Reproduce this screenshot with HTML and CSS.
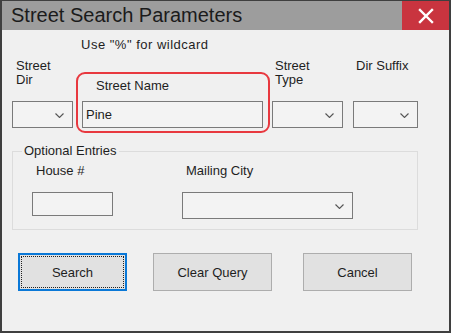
FILE: index.html
```html
<!DOCTYPE html>
<html lang="en">
<head>
  <meta charset="UTF-8" />
  <title>Street Search Parameters</title>
  <link rel="stylesheet" href="styles.css">
</head>
<body>

<div class="window">
  <div class="titlebar">
    <div class="title">Street Search Parameters</div>
    <div class="close">
      <svg width="16" height="16" viewBox="0 0 16 16"><path d="M2 2 L14 14 M14 2 L2 14" stroke="#fff" stroke-width="2.4" stroke-linecap="square"/></svg>
    </div>
  </div>

  <div class="content">
    <div class="hint">Use "%" for wildcard</div>

    <div class="fields">
      <div class="col col-dir">
        <div class="label tall">Street<br>Dir</div>
        <div class="combo w-dir"><svg class="chev" width="9" height="5" viewBox="0 0 9 5"><polyline points="0.5,0.5 4.5,4.5 8.5,0.5" fill="none" stroke="#555" stroke-width="1.1"/></svg></div>
      </div>

      <div class="name-box">
        <div class="label name-label">Street Name</div>
        <div class="textbox w-name">Pine</div>
      </div>

      <div class="col col-type">
        <div class="label tall">Street<br>Type</div>
        <div class="combo w-type"><svg class="chev" width="9" height="5" viewBox="0 0 9 5"><polyline points="0.5,0.5 4.5,4.5 8.5,0.5" fill="none" stroke="#555" stroke-width="1.1"/></svg></div>
      </div>

      <div class="col col-suffix">
        <div class="label tall">Dir Suffix</div>
        <div class="combo w-suffix"><svg class="chev" width="9" height="5" viewBox="0 0 9 5"><polyline points="0.5,0.5 4.5,4.5 8.5,0.5" fill="none" stroke="#555" stroke-width="1.1"/></svg></div>
      </div>
    </div>

    <fieldset class="group">
      <legend>Optional Entries</legend>
      <div class="col col-house">
        <div class="label">House #</div>
        <div class="textbox w-house"></div>
      </div>
      <div class="col col-city">
        <div class="label">Mailing City</div>
        <div class="combo w-city"><svg class="chev" width="9" height="5" viewBox="0 0 9 5"><polyline points="0.5,0.5 4.5,4.5 8.5,0.5" fill="none" stroke="#555" stroke-width="1.1"/></svg></div>
      </div>
    </fieldset>

    <div class="buttons">
      <button class="btn btn-search"><span>Search</span></button>
      <button class="btn btn-clear">Clear Query</button>
      <button class="btn btn-cancel">Cancel</button>
    </div>
  </div>
</div>

</body>
</html>
```

FILE: styles.css
```css
body { margin: 0; font-family: "Liberation Sans", Arial, sans-serif; font-size: 13px; color: #1e1e1e; }
.window {
  width: 451px;
  height: 333px;
  box-sizing: border-box;
  border: 2px solid #3f3f3f;
  border-top-width: 1px;
  background: #f0f0f0;
  overflow: hidden;
}
.titlebar { display: flex; height: 29px; background: #9d9d9d; }
.title { flex: 1; padding-left: 9px; font-size: 20px; line-height: 29px; color: #1b1b1b; }
.close {
  width: 47px;
  background: #c9343f;
  display: flex;
  align-items: center;
  justify-content: center;
}
.hint { margin: 8px 0 0 79px; line-height: 14px; letter-spacing: 0.5px; }
.fields { display: flex; align-items: flex-start; margin-top: 7px; padding-left: 10px; }
.label { line-height: 14px; padding-left: 4px; white-space: nowrap; }
.label.tall { height: 28px; }
.col { display: flex; flex-direction: column; }
.col-dir { width: 61px; }
.col-type { width: 71px; margin-left: 2px; }
.col-type .label, .col-suffix .label { padding-left: 3px; }
.col-suffix { width: 65px; margin-left: 10px; }
.combo, .textbox {
  box-sizing: border-box;
  border: 1px solid #7a7a7a;
  background: #f3f3f3;
}
.combo {
  height: 27px;
  margin-top: 14px;
  display: flex;
  align-items: center;
  justify-content: flex-end;
  padding: 2px 8px 0 0;
}
.w-dir { width: 61px; }
.w-type { width: 71px; }
.w-suffix { width: 65px; }
.name-box {
  width: 194px;
  box-sizing: border-box;
  margin: 13px 0 0 3px;
  padding: 5px 0 3px 4px;
  border: 2px solid #e8383f;
  border-radius: 9px;
}
.name-label { padding-left: 14px; }
.textbox { padding-left: 3px; line-height: 25px; }
.w-name { width: 181px; height: 27px; margin-top: 8px; }
.group {
  display: flex;
  width: 406px;
  box-sizing: border-box;
  margin: 11px 0 0 10px;
  padding: 6px 0 10px 9px;
  border: 1px solid #dcdcdc;
}
.group legend { padding: 0 2px; line-height: 14px; }
.col-house { margin-left: 10px; }
.w-house { width: 81px; height: 24px; margin-top: 14px; }
.col-city { margin-left: 69px; }
.w-city { width: 171px; }
.buttons { display: flex; margin: 23px 0 0 16px; }
.btn {
  height: 38px;
  box-sizing: border-box;
  font: inherit;
  color: #1e1e1e;
  background: #e1e1e1;
  border: 1px solid #adadad;
  padding: 0;
}
.btn-search { width: 109px; border: 2px solid #0a78d7; padding: 1px; }
.btn-search span {
  display: flex;
  height: 100%;
  align-items: center;
  justify-content: center;
  outline: 1px dotted #222;
  outline-offset: -1px;
}
.btn-clear { width: 119px; margin-left: 26px; }
.btn-cancel { width: 109px; margin-left: 31px; }
```
